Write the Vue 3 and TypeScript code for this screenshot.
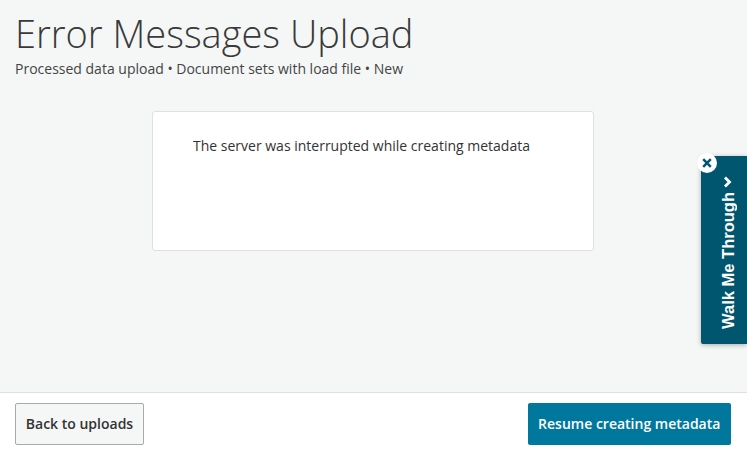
<script setup lang="ts">
const title = "Error Messages Upload";
const crumbs = "Processed data upload • Document sets with load file • New";
const message = "The server was interrupted while creating metadata";
</script>

<template>
  <div class="page">
    <main class="main">
      <h1 class="title">{{ title }}</h1>
      <p class="crumbs">{{ crumbs }}</p>
      <section class="card">
        <p class="message">{{ message }}</p>
      </section>
    </main>
    <footer class="footer">
      <button class="btn secondary">Back to uploads</button>
      <button class="btn primary">Resume creating metadata</button>
    </footer>
    <aside class="walk">
      <span class="walk-label">Walk Me Through
        <svg class="chev" viewBox="0 0 12 12" width="12" height="12">
          <path d="M1.5 3 L6 7.5 L10.5 3" fill="none" stroke="#fff" stroke-width="2.8" />
        </svg>
      </span>
      <span class="walk-close">
        <svg viewBox="0 0 10 10" width="10" height="10">
          <path d="M1.2 1.2 L8.8 8.8 M8.8 1.2 L1.2 8.8" fill="none" stroke="#00566f" stroke-width="2.5" />
        </svg>
      </span>
    </aside>
  </div>
</template>

<style>
html, body { margin: 0; padding: 0; }
</style>

<style scoped>
.page {
  position: relative;
  width: 747px;
  height: 452px;
  overflow: hidden;
  display: flex;
  flex-direction: column;
  background: #f5f7f7;
  font-family: "Open Sans", sans-serif;
  color: #333;
}
.main {
  flex: 1;
  padding: 0 16px 0 15px;
  min-height: 0;
}
.title {
  margin: 10px 0 0;
  font-size: 38px;
  line-height: 47px;
  font-weight: 300;
  color: #3a3a3a;
}
.crumbs {
  margin: 2px 0 0;
  font-size: 14px;
  line-height: 20px;
  color: #444;
}
.card {
  box-sizing: border-box;
  width: 442px;
  height: 140px;
  margin: 32px auto 0;
  padding: 24px 40px;
  background: #fff;
  border: 1px solid #e0e0e0;
  border-radius: 3px;
}
.message {
  margin: 0;
  font-size: 14px;
  line-height: 20px;
  color: #333;
}
.footer {
  box-sizing: border-box;
  height: 60px;
  display: flex;
  justify-content: space-between;
  align-items: center;
  padding: 2px 16.5px 0 15px;
  background: #fff;
  border-top: 1px solid #e0e0e0;
}
.btn {
  box-sizing: border-box;
  height: 42px;
  border-radius: 2px;
  font-family: "Open Sans", sans-serif;
  font-size: 14px;
  font-weight: 600;
  padding: 0;
  white-space: nowrap;
}
.secondary {
  width: 129px;
  background: #f5f7f7;
  border: 1px solid #aaa;
  color: #333;
}
.primary {
  width: 202.5px;
  background: #00789e;
  border: none;
  color: #fff;
}
.walk {
  position: absolute;
  left: 701px;
  top: 156px;
  width: 46px;
  height: 188px;
  background: #00566f;
  border-radius: 2px 0 0 2px;
  box-shadow: 0 1px 5px rgba(0, 0, 0, 0.3);
  display: flex;
  align-items: center;
  justify-content: center;
}
.walk-label {
  writing-mode: vertical-rl;
  transform: rotate(180deg);
  font-family: "Liberation Sans", Arial, sans-serif;
  font-weight: 700;
  font-size: 16.5px;
  color: #fff;
  white-space: nowrap;
  display: flex;
  align-items: center;
  gap: 4px;
  position: relative;
  top: 2px;
  left: 4px;
}
.chev {
  transform: rotate(90deg);
}
.walk-close {
  position: absolute;
  left: -4px;
  top: -3px;
  width: 20px;
  height: 20px;
  border-radius: 50%;
  background: #fff;
  display: flex;
  align-items: center;
  justify-content: center;
}
</style>
